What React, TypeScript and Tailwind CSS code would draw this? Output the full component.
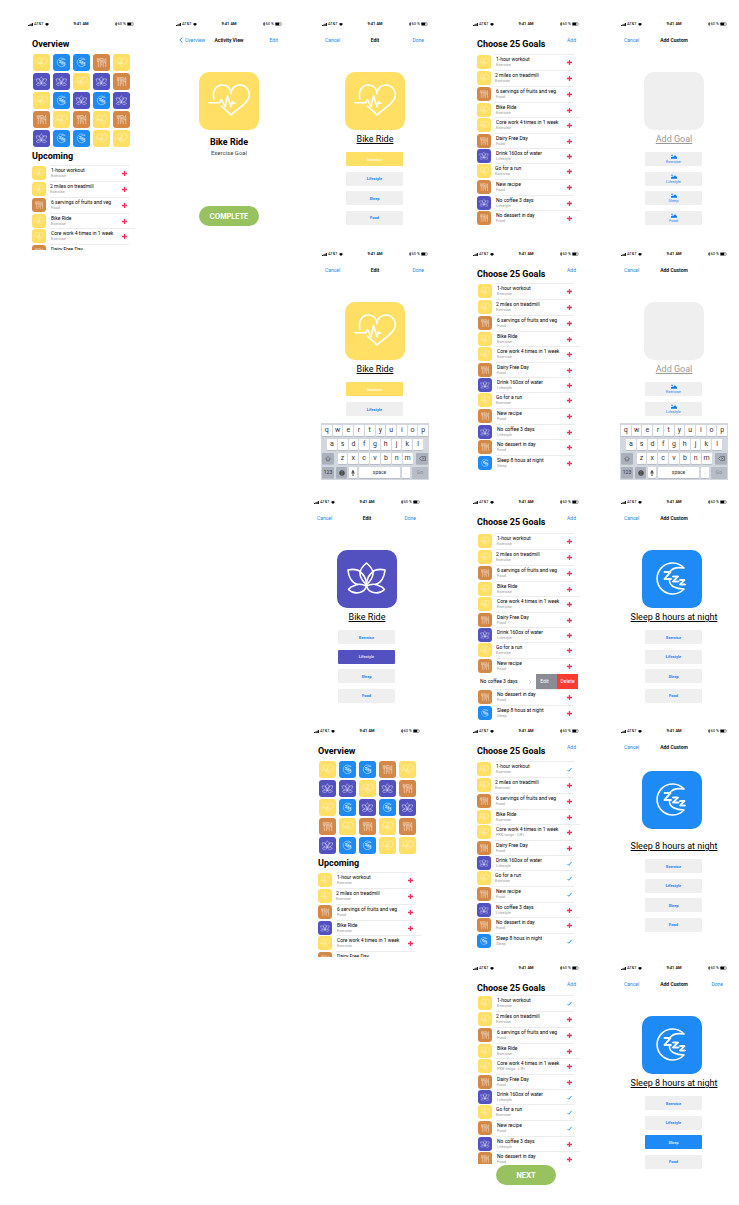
import React from "react";

type Kind = "exercise" | "lifestyle" | "sleep" | "food";
type Mark = "plus" | "check";

const tileColor: Record<Kind, string> = {
  exercise: "bg-[#ffdf64]",
  lifestyle: "bg-[#5350bf]",
  sleep: "bg-[#1e8af5]",
  food: "bg-[#d38848]",
};

const kindPaths: Record<Kind, string[]> = {
  exercise: [
    "M15 27c-2-8 2-14 8.500-14 5 0 8.500 3.500 8.500 9 0-5.500 4-9 9-9 6 0 10.500 6 9 12-1.500 7-10.500 11-18 18-4-4-7-6.500-9.500-9",
    "M10 30.700h10.500l2-3 3.500 7 2.500-11 3.500 11 1.500-5 1.500 1.500H36",
  ],
  lifestyle: [
    "M29.500 35c-4-4-6.500-8-6.500-11.500 0-4 3.500-8 6.500-10.500 3 2.500 6.500 6.500 6.500 10.500 0 3.500-2.500 7.500-6.500 11.500Z",
    "M23 21c-3-1.500-8-2-12-1 .5 7 4 13 9.500 14.500M22 21c4 2.500 7.500 7 7.500 14",
    "M36 21c3-1.500 8-2 12-1-.5 7-4 13-9.500 14.500M37 21c-4 2.500-7.500 7-7.500 14",
    "M29.500 36c-4-2-9-2-12-.5-3 1-5 2.500-6 4 3 3 7 4 11 3 4-.5 6-3.500 7-6.500Zm0 0c4-2 9-2 12-.5 3 1 5 2.500 6 4-3 3-7 4-11 3-4-.5-6-3.500-7-6.500Z",
  ],
  sleep: [
    "M42 18A15.500 15.500 0 1 0 42 39M42 18c-6-1-11.500 0-14 3.500M42 39c-8 0-15-3-14.500-9",
    "M22.500 22h6l-6 7h6.500M31 26.500h5l-5 5h5.500M38 30h4.500l-4.500 4.500h5",
    "M22.500 22h6l-6 7h6.500M31 26.500h5l-5 5h5.500M38 30h4.500l-4.500 4.500h5",
  ],
  food: [
    "M15 15v8c0 4 7 4 7 0v-8M18.500 15v29M45 44V15c-5 3-5 9-5 15h5",
    "M26 44V15h10v29M31 20v18M28.500 24h5",
  ],
};

function Tile({ kind, large, className }: { kind: Kind; large?: boolean; className: string }) {
  return (
    <div className={`shrink-0 ${tileColor[kind]} ${className}`}>
      <svg
        viewBox="0 0 60 58"
        className={`h-full w-full ${large ? "" : "opacity-70"}`}
        fill="none"
        stroke="white"
        strokeWidth={large ? 1.6 : 2.2}
        strokeLinecap="round"
        strokeLinejoin="round"
        aria-hidden="true"
      >
        {kindPaths[kind].map((d, i) => (
          <path key={i} d={d} />
        ))}
      </svg>
    </div>
  );
}

function StatusBar() {
  return (
    <div className="flex h-2 shrink-0 items-center justify-between px-px text-[4px] leading-none text-black">
      <span className="flex flex-1 items-center gap-px">
        <svg viewBox="0 0 10 6" className="h-[3px] w-[5px]" aria-hidden="true">
          <path d="M0 4h2v2H0zM2.600 3h2v3h-2zM5.200 1.500h2V6h-2zM7.800 0h2v6h-2z" />
        </svg>
        AT&amp;T
        <svg viewBox="0 0 12 9" className="h-[3px] w-1" aria-hidden="true">
          <path d="M0 3q6-6 12 0l-6 6z" />
        </svg>
      </span>
      <span className="font-semibold">9:41 AM</span>
      <span className="flex flex-1 items-center justify-end gap-px">
        <svg viewBox="0 0 6 10" className="h-1 w-[2px]" fill="none" stroke="black" strokeWidth="1.300" aria-hidden="true">
          <path d="M0 2.500 6 7.500 3 10V0l3 2.500-6 5" />
        </svg>
        60 %
        <svg viewBox="0 0 14 7" className="h-1 w-[7px]" aria-hidden="true">
          <rect x=".4" y=".4" width="11.500" height="6.200" rx="1.500" fill="none" stroke="black" strokeWidth=".7" />
          <rect x="1" y="1" width="7.500" height="5" rx="1" />
          <path d="M12.800 2.300v2.400q1.500-1.200 0-2.400" />
        </svg>
      </span>
    </div>
  );
}

function NavLink({ children, className = "" }: { children: React.ReactNode; className?: string }) {
  return (
    <a href="#" className={`text-[#1889ea] ${className}`}>
      {children}
    </a>
  );
}

function NavBar({ left, title, right }: { left?: React.ReactNode; title?: string; right?: string }) {
  return (
    <nav className="mt-2 grid h-2 grid-cols-[1fr_auto_1fr] items-center px-1 text-[5px] leading-none">
      <span>{left}</span>
      <h2 className="font-semibold text-black">{title}</h2>
      <span className="pr-px text-right">{right && <NavLink>{right}</NavLink>}</span>
    </nav>
  );
}

function Screen({ children, className = "" }: { children: React.ReactNode; className?: string }) {
  return (
    <section className={`flex w-[108px] flex-col ${className}`}>
      <StatusBar />
      {children}
    </section>
  );
}

type Goal = { name: string; note: string; kind: Kind; tall: boolean; inset?: boolean; wide?: boolean };

const goals: Goal[] = [
  { name: "1-hour workout", note: "Exercise", kind: "exercise", tall: true },
  { name: "2 miles on treadmill", note: "Exercise", kind: "exercise", tall: true, inset: true },
  { name: "6 servings of fruits and veg", note: "Food", kind: "food", tall: true },
  { name: "Bike Ride", note: "Exercise", kind: "exercise", tall: false },
  { name: "Core work 4 times in 1 week", note: "Exercise", kind: "exercise", tall: true, wide: true },
  { name: "Dairy Free Day", note: "Food", kind: "food", tall: false },
  { name: "Drink 160ox of water", note: "Lifestyle", kind: "lifestyle", tall: false },
  { name: "Go for a run", note: "Exercise", kind: "exercise", tall: true, inset: true },
  { name: "New recipe", note: "Food", kind: "food", tall: true },
  { name: "No coffee 3 days", note: "Lifestyle", kind: "lifestyle", tall: false },
  { name: "No dessert in day", note: "Food", kind: "food", tall: true, wide: true },
];

const sleepGoal: Goal = { name: "Sleep 8 hous at night", note: "Sleep", kind: "sleep", tall: true };
const goalsWithSleep: Goal[] = [...goals, sleepGoal];
const notedGoals: Goal[] = goals.map((g) => (g.wide && g.kind === "exercise" ? { ...g, note: "PKK twigs - LIFt" } : g));
const pickedGoals: Goal[] = [...notedGoals, { ...sleepGoal, name: "Sleep 8 hous in night" }];
const upcoming: Goal[] = goals.slice(0, 6);
const upcomingLifestyle: Goal[] = upcoming.map((g) => (g.name === "Bike Ride" ? { ...g, kind: "lifestyle" } : g));

const checkedIndexes = [0, 6, 7, 8, 11];

function MarkIcon({ mark }: { mark: Mark }) {
  return mark === "plus" ? (
    <svg viewBox="0 0 10 10" className="h-[5px] w-[5px]" stroke="#ee2f5d" strokeWidth="2.600" aria-hidden="true">
      <path d="M5 0v10M0 5h10" />
    </svg>
  ) : (
    <svg viewBox="0 0 10 10" className="h-[5px] w-[5px]" fill="none" stroke="#2f95ee" strokeWidth="2" aria-hidden="true">
      <path d="M1 6l2.500 2.500L9 2" />
    </svg>
  );
}

function GoalRow({ goal, mark }: { goal: Goal; mark: Mark }) {
  return (
    <li className={`flex shrink-0 ${goal.tall ? "h-4" : "h-[15px]"}`}>
      <Tile kind={goal.kind} className="mt-px h-[14px] w-[14px] rounded-[3px]" />
      <div className={`ml-1 flex flex-1 border-t border-[#ececec] ${goal.wide ? "" : "mr-[6px]"}`}>
        <div className={`flex-1 whitespace-nowrap pt-px ${goal.inset ? "" : "pl-px"}`}>
          <p className="text-[5px] leading-[6px] text-black">{goal.name}</p>
          <p className="text-[4px] leading-[5px] text-[#999]">{goal.note}</p>
        </div>
        <button type="button" aria-label={`${mark === "plus" ? "Add" : "Remove"} ${goal.name}`} className={`flex w-[5px] items-center ${goal.wide ? "mr-2" : "mr-[2px]"}`}>
          <MarkIcon mark={mark} />
        </button>
      </div>
    </li>
  );
}

function SwipedRow({ name }: { name: string }) {
  return (
    <li className="mr-[2px] flex h-[15px] shrink-0 items-stretch text-[5px] leading-none">
      <span className="flex flex-1 items-center justify-between whitespace-nowrap pl-[2px] pr-[5px] text-black">
        {name}
        <svg viewBox="0 0 4 8" className="h-1 w-[2px]" fill="none" stroke="#aaa" aria-hidden="true">
          <path d="M0 0l4 4-4 4" />
        </svg>
      </span>
      <button type="button" className="w-[21px] bg-[#8b8b94] pr-1 text-white">Edit</button>
      <button type="button" className="w-[21px] bg-[#ff3a2f] text-white">Delete</button>
    </li>
  );
}

function GoalList({ items, checked = [], swiped, className }: { items: Goal[]; checked?: number[]; swiped?: number; className: string }) {
  return (
    <ul className={`flex flex-col ${className}`}>
      {items.map((g, i) =>
        i === swiped ? <SwipedRow key={g.name} name={g.name} /> : <GoalRow key={g.name} goal={g} mark={checked.includes(i) ? "check" : "plus"} />
      )}
    </ul>
  );
}

const board: Kind[] = [
  "exercise", "sleep", "sleep", "food", "exercise",
  "lifestyle", "lifestyle", "exercise", "lifestyle", "food",
  "exercise", "sleep", "lifestyle", "sleep", "lifestyle",
  "food", "exercise", "food", "exercise", "food",
  "lifestyle", "sleep", "sleep", "exercise", "exercise",
];

function OverviewScreen({ items }: { items: Goal[] }) {
  return (
    <Screen className="h-[230px] overflow-hidden">
      <h1 className="mt-[11px] shrink-0 pl-[5px] text-[9px] font-bold leading-[10px] text-black">Overview</h1>
      <div className="mt-[5px] grid shrink-0 grid-cols-[repeat(5,17px)] gap-x-[3px] gap-y-[2px] pl-[6px]">
        {board.map((kind, i) => (
          <Tile key={i} kind={kind} className="h-[17px] w-[17px] rounded-[3px]" />
        ))}
      </div>
      <h1 className="mt-[4px] shrink-0 pl-[5px] text-[9px] font-bold leading-[10px] text-black">Upcoming</h1>
      <GoalList items={items} className="mt-[4px] pl-[5px]" />
    </Screen>
  );
}

function GoalsScreen({ children }: { children: React.ReactNode }) {
  return (
    <Screen>
      <div className="mt-2 flex h-[18px] items-start justify-between pl-[5px] pr-1">
        <h1 className="whitespace-nowrap pt-[3px] text-[9px] font-bold leading-[10px] text-black">Choose 25 Goals</h1>
        <NavLink className="pt-px text-[5px] leading-[6px]">Add</NavLink>
      </div>
      {children}
    </Screen>
  );
}

function PictureIcon() {
  return (
    <svg viewBox="0 0 12 9" className="h-[5px] w-[6px]" fill="#0a7cf8" aria-hidden="true">
      <circle cx="2" cy="2" r="1.500" />
      <path d="M0 9V6l3-1.500 1.500 1L8 2l4 4v3z" />
    </svg>
  );
}

const categories: { kind: Kind; label: string }[] = [
  { kind: "exercise", label: "Exercise" },
  { kind: "lifestyle", label: "Lifestyle" },
  { kind: "sleep", label: "Sleep" },
  { kind: "food", label: "Food" },
];

function CategoryButtons({ selected, icons, count = 4 }: { selected?: Kind; icons?: boolean; count?: number }) {
  return (
    <div className={`ml-[25px] mt-[7px] flex w-[57px] flex-col justify-between ${count === 4 ? "h-[73px]" : "h-[34px]"}`}>
      {categories.slice(0, count).map(({ kind, label }) => (
        <button
          key={kind}
          type="button"
          className={`flex h-[14px] flex-col items-center justify-center rounded-[1px] text-[4px] leading-[5px] ${icons ? "" : "font-bold"} ${
            selected === kind ? `${tileColor[kind]} text-white/80` : "bg-[#efefef] text-[#1484f2]"
          }`}
        >
          {icons && <PictureIcon />}
          {label}
        </button>
      ))}
    </div>
  );
}

function EditorScreen({
  title,
  right,
  kind,
  name,
  selected,
  icons,
  raised,
  keyboard,
}: {
  title: string;
  right?: string;
  kind?: Kind;
  name: string;
  selected?: Kind;
  icons?: boolean;
  raised?: boolean;
  keyboard?: boolean;
}) {
  return (
    <Screen>
      <NavBar left={<NavLink>Cancel</NavLink>} title={title} right={right} />
      <div className={`flex h-[89px] flex-col ${raised ? "pt-5" : "pt-7"}`}>
        {kind ? (
          <Tile kind={kind} large className={`h-[58px] w-[60px] rounded-[10px] ${kind === "sleep" ? "ml-[22px]" : "ml-6"}`} />
        ) : (
          <div className="ml-6 h-[58px] w-[60px] rounded-[10px] bg-[#efefef]" />
        )}
      </div>
      <p className={`h-3 whitespace-nowrap text-center text-[9px] leading-3 underline decoration-1 underline-offset-1 ${kind ? "text-black" : "text-[#999]"}`}>{name}</p>
      <CategoryButtons selected={selected} icons={icons} count={keyboard ? 2 : 4} />
      {keyboard && <Keyboard />}
    </Screen>
  );
}

function Key({ children, className = "flex-1 bg-white", label }: { children: React.ReactNode; className?: string; label?: string }) {
  return (
    <button type="button" aria-label={label} className={`flex h-[11px] items-center justify-center rounded-[1px] text-[#333] shadow-[0_1px_0_#b8bcc4] ${className}`}>
      {children}
    </button>
  );
}

function Keyboard() {
  return (
    <div className="mt-[7px] flex h-[57px] flex-col gap-[3px] bg-[#d3d7de] px-px pt-[2px] text-[7px] leading-none">
      <div className="flex gap-px">
        {"qwertyuiop".split("").map((c) => (
          <Key key={c}>{c}</Key>
        ))}
      </div>
      <div className="flex gap-px px-[5px]">
        {"asdfghjkl".split("").map((c) => (
          <Key key={c}>{c}</Key>
        ))}
      </div>
      <div className="flex justify-between">
        <Key label="Shift" className="w-3 bg-[#aab0bc]">
          <svg viewBox="0 0 12 12" className="h-[6px] w-[6px]" fill="none" stroke="#444" aria-hidden="true">
            <path d="M6 1 11 6H8.500v4h-5V6H1z" />
          </svg>
        </Key>
        <div className="flex w-[75px] gap-px">
          {"zxcvbnm".split("").map((c) => (
            <Key key={c}>{c}</Key>
          ))}
        </div>
        <Key label="Delete" className="w-3 bg-[#aab0bc]">
          <svg viewBox="0 0 14 10" className="h-[5px] w-[7px]" fill="none" stroke="#444" aria-hidden="true">
            <path d="M5 1h8v8H5L1 5zM6.500 3l4 4M10.500 3l-4 4" />
          </svg>
        </Key>
      </div>
      <div className="flex gap-[2px] text-[5px]">
        <Key className="w-3 bg-[#aab0bc]">123</Key>
        <Key label="Next keyboard" className="w-[11px] bg-[#aab0bc]">
          <svg viewBox="0 0 12 12" className="h-[6px] w-[6px]" fill="#444" stroke="#444" aria-hidden="true">
            <circle cx="6" cy="6" r="5" />
            <path d="M1 6h10M6 1v10M3 2.500q3 2 6 0M3 9.500q3-2 6 0" stroke="#888" strokeWidth=".7" fill="none" />
          </svg>
        </Key>
        <Key label="Dictate" className="w-2 bg-white">
          <svg viewBox="0 0 8 12" className="h-[6px] w-1" fill="none" stroke="#444" aria-hidden="true">
            <rect x="2.500" y="1" width="3" height="6" rx="1.500" fill="#444" />
            <path d="M1 5c0 5 6 5 6 0M4 9v2.500M2 11.500h4" />
          </svg>
        </Key>
        <Key className="flex-1 bg-white">space</Key>
        <Key className="w-2 bg-white">.</Key>
        <Key className="w-4 bg-[#b7bcc6] text-[#858a94]">Go</Key>
      </div>
    </div>
  );
}

function PillButton({ children, className }: { children: React.ReactNode; className: string }) {
  return (
    <button type="button" className={`mx-auto flex h-5 w-[60px] items-center justify-center rounded-full bg-[#97c25f] font-[Inter,sans-serif] text-[7px] font-bold leading-none text-white ${className}`}>
      {children}
    </button>
  );
}

function ActivityScreen() {
  return (
    <Screen>
      <NavBar
        left={
          <NavLink className="flex items-center gap-[2px]">
            <svg viewBox="0 0 6 10" className="h-[6px] w-1" fill="none" stroke="#1889ea" strokeWidth="1.600" aria-hidden="true">
              <path d="M5 1 1 5l4 4" />
            </svg>
            Overview
          </NavLink>
        }
        title="Activity View"
        right="Edit"
      />
      <Tile kind="exercise" large className="mx-auto mt-7 h-[58px] w-[60px] rounded-[10px]" />
      <p className="mt-[7px] text-center text-[9px] font-bold leading-[10px] text-black">Bike Ride</p>
      <p className="mt-[2px] text-center text-[6px] leading-2 text-[#444]">Exercise Goal</p>
      <PillButton className="mt-[49px]">COMPLETE</PillButton>
    </Screen>
  );
}

const columns = "grid grid-cols-[148fr_146fr_151fr_148fr_108fr]";
const shiftedColumns = "grid grid-cols-[148fr_138fr_159fr_148fr_108fr]";

export default function App() {
  return (
    <main className="grid min-h-screen grid-rows-[230px_248px_229px_237px_auto] bg-white pl-[27px] pr-[11px] pt-5 font-[Roboto,sans-serif]">
      <div className={columns}>
        <OverviewScreen items={upcoming} />
        <ActivityScreen />
        <EditorScreen title="Edit" right="Done" kind="exercise" name="Bike Ride" selected="exercise" />
        <GoalsScreen>
          <GoalList items={goals} className="pl-[5px]" />
        </GoalsScreen>
        <EditorScreen title="Add Custom" name="Add Goal" icons />
      </div>
      <div className={columns}>
        <div className="col-start-3">
          <EditorScreen title="Edit" right="Done" kind="exercise" name="Bike Ride" selected="exercise" keyboard />
        </div>
        <GoalsScreen>
          <GoalList items={goalsWithSleep} className="-mt-px pl-[6px]" />
        </GoalsScreen>
        <EditorScreen title="Add Custom" name="Add Goal" icons keyboard />
      </div>
      <div className={shiftedColumns}>
        <div className="col-start-3">
          <EditorScreen title="Edit" right="Done" kind="lifestyle" name="Bike Ride" selected="lifestyle" />
        </div>
        <GoalsScreen>
          <GoalList items={goalsWithSleep} swiped={9} className="mt-px pl-[6px]" />
        </GoalsScreen>
        <EditorScreen title="Add Custom" kind="sleep" name="Sleep 8 hours at night" />
      </div>
      <div className={shiftedColumns}>
        <div className="col-start-3">
          <OverviewScreen items={upcomingLifestyle} />
        </div>
        <GoalsScreen>
          <GoalList items={pickedGoals} checked={checkedIndexes} className="pl-[5px]" />
        </GoalsScreen>
        <EditorScreen title="Add Custom" kind="sleep" name="Sleep 8 hours at night" raised />
      </div>
      <div className={columns}>
        <div className="col-start-4">
          <GoalsScreen>
            <GoalList items={notedGoals} checked={checkedIndexes} className="-mt-[3px] h-[169px] overflow-hidden pl-[6px]" />
            <PillButton className="mt-px">NEXT</PillButton>
          </GoalsScreen>
        </div>
        <EditorScreen title="Add Custom" right="Done" kind="sleep" name="Sleep 8 hours at night" selected="sleep" />
      </div>
    </main>
  );
}
